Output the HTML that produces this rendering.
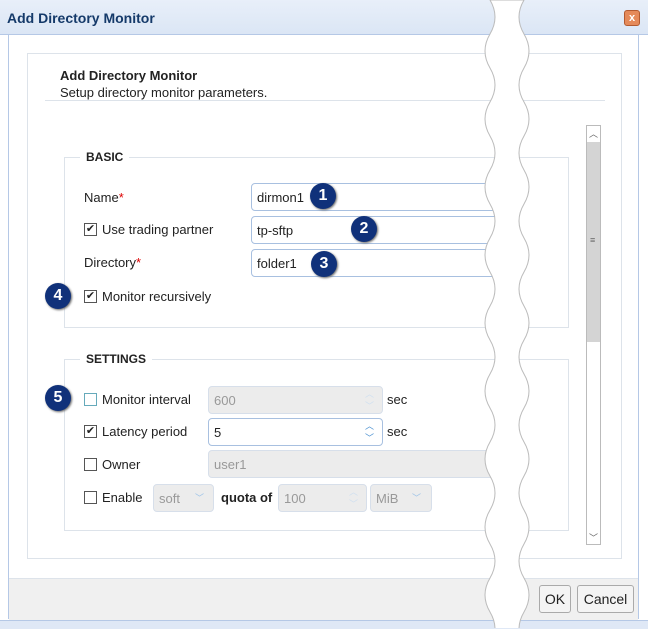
<!DOCTYPE html>
<html><head><style>
body{margin:0;width:648px;height:628px;overflow:hidden;background:#fff;font-family:"Liberation Sans",Arial,sans-serif;font-size:13px;color:#222;position:relative}
.abs{position:absolute}
.title{left:0;top:0;width:648px;height:34px;background:linear-gradient(#e8eff9,#dbe6f5);border-bottom:1px solid #b5c8e6}
.title span{position:absolute;left:7px;top:10px;font-weight:bold;color:#153a6a;font-size:14px}
.close{right:8px;top:10px;width:14px;height:14px;background:#e58a5a;border:1px solid #b35a30;border-radius:3px;color:#fff;font-size:11px;font-weight:bold;text-align:center;line-height:14px}
.lbl{position:absolute;font-size:13px}
.inp{position:absolute;height:28px;border:1px solid #a8c0e0;border-radius:4px;background:#fff;box-sizing:border-box;padding:6px 5px;font-size:13px}
.dis{background:#ececec;border-color:#d7dfea;color:#999}
.cb{position:absolute;width:11px;height:11px;border:1px solid #555;background:#fff;font-size:11px;line-height:11px;text-align:center}
.badge{position:absolute;width:26px;height:26px;border-radius:50%;background:#10317a;color:#fff;font-weight:bold;font-size:16px;text-align:center;line-height:26px;box-shadow:1px 1px 2px #666}
.fs{position:absolute;border:1px solid #dde3ea}
.leg{position:absolute;background:#fff;padding:0 6px;font-weight:bold;font-size:12px}
.star{color:#d00}
.btn{position:absolute;height:28px;border:1px solid #aaa;border-radius:3px;background:#f4f4f4;box-sizing:border-box;text-align:center;line-height:26px;font-size:14px}
.arr{position:absolute;font-size:9px;line-height:12px;color:#9cc3e8}
</style></head><body>
<div class="abs title"><span>Add Directory Monitor</span></div>
<div class="abs close">x</div>
<div class="abs" style="left:8px;top:34px;width:631px;height:585px;border:1px solid #b5c8e6;box-sizing:border-box"></div>
<div class="abs" style="left:27px;top:53px;width:595px;height:506px;border:1px solid #dde3ea;box-sizing:border-box"></div>
<div class="abs" style="left:60px;top:68px;font-weight:bold;font-size:13px">Add Directory Monitor</div>
<div class="abs" style="left:60px;top:85px;font-size:13px">Setup directory monitor parameters.</div>
<div class="abs" style="left:45px;top:100px;width:560px;height:1px;background:#dde3ea"></div>

<div class="fs" style="left:64px;top:157px;width:503px;height:169px"></div>
<div class="leg" style="left:80px;top:150px">BASIC</div>
<div class="lbl" style="left:84px;top:190px">Name<span class="star">*</span></div>
<div class="inp" style="left:251px;top:183px;width:260px">dirmon1</div>
<div class="badge" style="left:310px;top:183px">1</div>
<div class="cb" style="left:84px;top:223px">✔</div>
<div class="lbl" style="left:102px;top:222px">Use trading partner</div>
<div class="inp" style="left:251px;top:216px;width:260px">tp-sftp</div>
<div class="badge" style="left:351px;top:216px">2</div>
<div class="lbl" style="left:84px;top:255px">Directory<span class="star">*</span></div>
<div class="inp" style="left:251px;top:249px;width:260px">folder1</div>
<div class="badge" style="left:311px;top:251px">3</div>
<div class="badge" style="left:45px;top:283px">4</div>
<div class="cb" style="left:84px;top:290px">✔</div>
<div class="lbl" style="left:102px;top:289px">Monitor recursively</div>

<div class="fs" style="left:64px;top:359px;width:503px;height:170px"></div>
<div class="leg" style="left:80px;top:352px">SETTINGS</div>
<div class="badge" style="left:45px;top:385px">5</div>
<div class="cb" style="left:84px;top:393px;border-color:#6ab"></div>
<div class="lbl" style="left:102px;top:392px">Monitor interval</div>
<div class="inp dis" style="left:208px;top:386px;width:175px">600</div>
<div class="arr" style="left:365px;top:388px;color:#cfdff0">︿<br>﹀</div>
<div class="lbl" style="left:387px;top:392px">sec</div>
<div class="cb" style="left:84px;top:425px">✔</div>
<div class="lbl" style="left:102px;top:424px">Latency period</div>
<div class="inp" style="left:208px;top:418px;width:175px">5</div>
<div class="arr" style="left:365px;top:420px;color:#4a90d0">︿<br>﹀</div>
<div class="lbl" style="left:387px;top:424px">sec</div>
<div class="cb" style="left:84px;top:458px"></div>
<div class="lbl" style="left:102px;top:457px">Owner</div>
<div class="inp dis" style="left:208px;top:450px;width:300px">user1</div>
<div class="cb" style="left:84px;top:491px"></div>
<div class="lbl" style="left:102px;top:490px">Enable</div>
<div class="inp dis" style="left:153px;top:484px;width:61px">soft</div>
<div class="arr" style="left:195px;top:492px;color:#9cc3e8">﹀</div>
<div class="lbl" style="left:221px;top:490px;font-weight:bold">quota of</div>
<div class="inp dis" style="left:278px;top:484px;width:89px">100</div>
<div class="arr" style="left:349px;top:486px;color:#cfdff0">︿<br>﹀</div>
<div class="inp dis" style="left:370px;top:484px;width:62px">MiB</div>
<div class="arr" style="left:412px;top:492px;color:#9cc3e8">﹀</div>

<div class="abs" style="left:586px;top:125px;width:15px;height:420px;border:1px solid #bbb;box-sizing:border-box;background:#fff"></div>
<div class="abs" style="left:587px;top:142px;width:13px;height:200px;background:#d4d4d4"></div>
<div class="abs" style="left:590px;top:235px;font-size:9px;color:#666">≡</div>
<div class="abs" style="left:589px;top:127px;font-size:9px;color:#666">︿</div>
<div class="abs" style="left:589px;top:531px;font-size:9px;color:#666">﹀</div>

<div class="abs" style="left:9px;top:578px;width:629px;height:41px;background:#f0f0f0;border-top:1px solid #dde3ea"></div>
<div class="abs" style="left:0;top:620px;width:648px;height:8px;background:#dfe8f6;border-top:1px solid #b5c8e6"></div>
<div class="btn" style="left:539px;top:585px;width:32px">OK</div>
<div class="btn" style="left:577px;top:585px;width:57px">Cancel</div>

<svg class="abs" style="left:470px;top:0" width="70" height="628">
<path d="M20 0 Q30 17 20 34 Q10 51 20 68 Q30 85 20 102 Q10 119 20 136 Q30 153 20 170 Q10 187 20 204 Q30 221 20 238 Q10 255 20 272 Q30 289 20 306 Q10 323 20 340 Q30 357 20 374 Q10 391 20 408 Q30 425 20 442 Q10 459 20 476 Q30 493 20 510 Q10 527 20 544 Q30 561 20 578 Q10 595 20 612 Q30 629 20 646 L54 646 Q44 629 54 612 Q64 595 54 578 Q44 561 54 544 Q64 527 54 510 Q44 493 54 476 Q64 459 54 442 Q44 425 54 408 Q64 391 54 374 Q44 357 54 340 Q64 323 54 306 Q44 289 54 272 Q64 255 54 238 Q44 221 54 204 Q64 187 54 170 Q44 153 54 136 Q64 119 54 102 Q44 85 54 68 Q64 51 54 34 Q44 17 54 0 Z" fill="#fff" stroke="#bbb" stroke-width="1"/>
</svg>
</body></html>
